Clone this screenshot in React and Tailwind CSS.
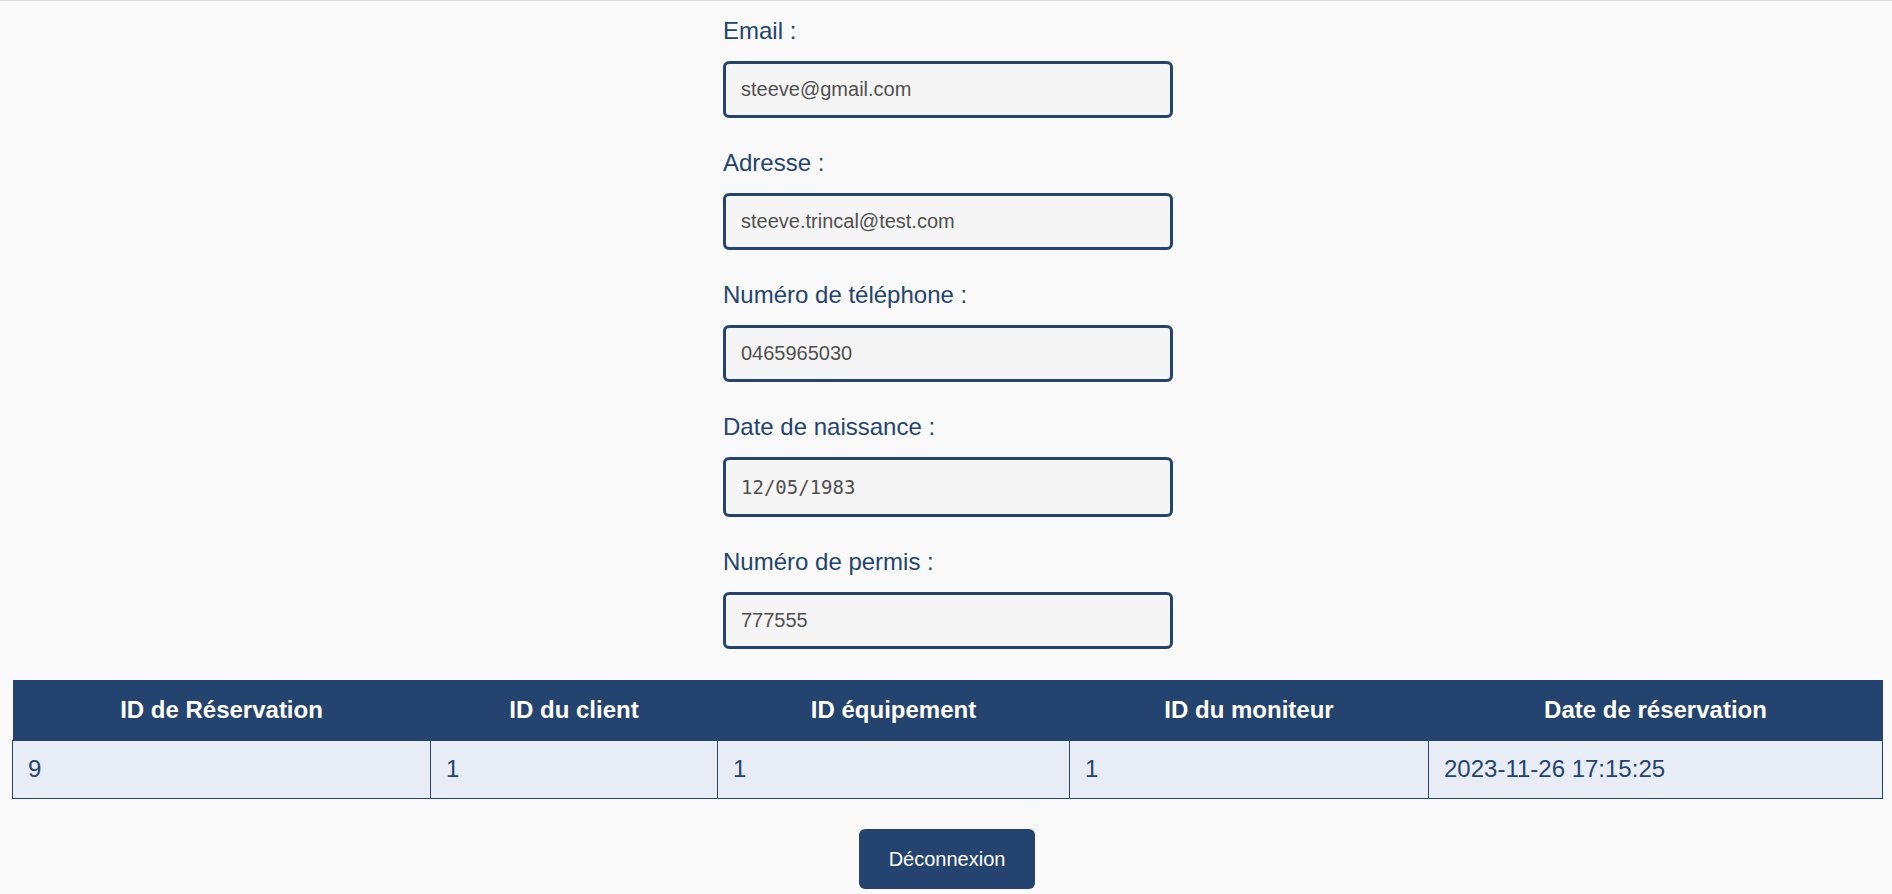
import React from 'react';

const fields = [
  { label: 'Email :', value: 'steeve@gmail.com' },
  { label: 'Adresse :', value: 'steeve.trincal@test.com' },
  { label: 'Numéro de téléphone :', value: '0465965030' },
  { label: 'Date de naissance :', value: '12/05/1983', mono: true },
  { label: 'Numéro de permis :', value: '777555' },
];

const columns = [
  { title: 'ID de Réservation', w: 'w-[418px]' },
  { title: 'ID du client', w: 'w-[287px]' },
  { title: 'ID équipement', w: 'w-[352px]' },
  { title: 'ID du moniteur', w: 'w-[359px]' },
  { title: 'Date de réservation', w: 'w-[454px]' },
];

const rows = [['9', '1', '1', '1', '2023-11-26 17:15:25']];

function Field({ label, value, mono }) {
  return (
    <div className="mb-[31px]">
      <label className="block text-[24px] leading-[28px] text-[#24446f] mb-[16px]">{label}</label>
      <input
        type="text"
        readOnly
        value={value}
        className={`block w-full border-[3px] border-[#24446f] rounded-[6px] bg-[#f5f5f5] pl-[15px] text-[#505050] outline-none ${
          mono
            ? "h-[60px] text-[19px] font-['DejaVu_Sans_Mono',monospace]"
            : 'h-[57px] text-[20px]'
        }`}
      />
    </div>
  );
}

export default function App() {
  return (
    <div className="min-h-[894px] bg-[#f9f9f9] border-t border-[#dcdcdc] font-['Liberation_Sans',Arial,sans-serif] pt-[16px]">
      <form className="w-[454px] mx-auto pl-[4px]" onSubmit={(e) => e.preventDefault()}>
        {fields.map((f) => (
          <Field key={f.label} {...f} />
        ))}
      </form>

      <table className="w-[1870px] ml-[12px] border-collapse table-fixed">
        <thead>
          <tr>
            {columns.map((c) => (
              <th
                key={c.title}
                className={`${c.w} h-[60px] bg-[#24446f] text-white text-[24px] font-bold text-center`}
              >
                {c.title}
              </th>
            ))}
          </tr>
        </thead>
        <tbody>
          {rows.map((r, i) => (
            <tr key={i}>
              {r.map((cell, j) => (
                <td
                  key={j}
                  className="h-[58px] bg-[#e8edf5] border border-[#24446f] px-[15px] text-[24px] text-[#24446f] text-left"
                >
                  {cell}
                </td>
              ))}
            </tr>
          ))}
        </tbody>
      </table>

      <div className="flex justify-center mt-[30px]">
        <button className="bg-[#24446f] text-white text-[20px] px-[30px] py-[15px] rounded-[6px] ml-[2px]">
          Déconnexion
        </button>
      </div>
    </div>
  );
}
